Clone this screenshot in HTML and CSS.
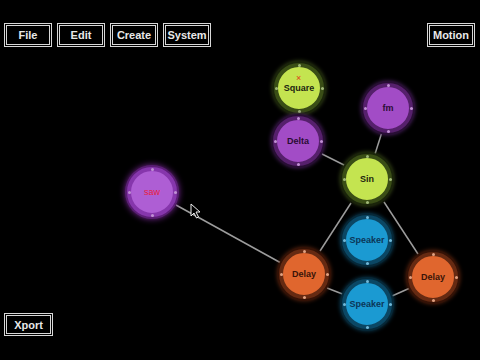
FILE: index.html
```html
<!DOCTYPE html>
<html lang="en">
<head>
    <meta charset="UTF-8">
    <title>Patch Editor</title>
    <link rel="stylesheet" href="styles.css">
</head>
<body>

<!-- Patch canvas: cables + nodes -->
<div class="canvas">
    <svg class="cables" width="480" height="360" viewBox="0 0 480 360">
        <line x1="322" y1="154" x2="346" y2="166"/>
        <line x1="382" y1="132" x2="375" y2="154"/>
        <line x1="351" y1="203" x2="320" y2="251"/>
        <line x1="384" y1="202" x2="418" y2="254"/>
        <line x1="327" y1="288" x2="345" y2="295"/>
        <line x1="392" y1="296" x2="410" y2="288"/>
        <line x1="176" y1="205" x2="281" y2="263"/>
    </svg>

    <div class="node lime" style="left:274px; top:63px;"><span class="del">×</span>Square</div>
    <div class="node purple" style="left:363px; top:83px;">fm</div>
    <div class="node purple" style="left:273px; top:116px;">Delta</div>
    <div class="node lime" style="left:342px; top:154px;">Sin</div>
    <div class="node purple selected" style="left:127px; top:167px;">saw</div>
    <div class="node blue" style="left:342px; top:215px;">Speaker</div>
    <div class="node orange" style="left:279px; top:249px;">Delay</div>
    <div class="node orange" style="left:408px; top:252px;">Delay</div>
    <div class="node blue" style="left:342px; top:279px;">Speaker</div>

    <!-- mouse pointer -->
    <svg class="pointer" width="12" height="16" viewBox="0 0 12 16" style="left:190px; top:203px;">
        <path d="M1 1 L1 13 L4 10 L6.5 15 L8.5 14 L6 9 L10 9 Z" fill="#000" stroke="#eee" stroke-width="1"/>
    </svg>
</div>

<div class="menu-bar">
    <div class="menu-group">
        <button class="menu-button">File</button>
        <button class="menu-button">Edit</button>
        <button class="menu-button">Create</button>
        <button class="menu-button">System</button>
    </div>
    <button class="menu-button">Motion</button>
</div>

<div class="bottom-bar">
    <button class="menu-button">Xport</button>
</div>

</body>
</html>
```

FILE: styles.css
```css
body {
    margin: 0;
    width: 480px;
    height: 360px;
    background-color: #000;
    font-family: "Liberation Sans", Arial, sans-serif;
    display: flex;
    flex-direction: column;
    justify-content: space-between;
    overflow: hidden;
    position: relative;
}
.menu-bar {
    display: flex;
    justify-content: space-between;
    padding: 23px 5px 0 4px;
    position: relative;
}
.menu-group {
    display: flex;
    gap: 5px;
}
.menu-button {
    width: 48px;
    height: 24px;
    background-color: #000;
    color: #e8e8e8;
    border: 3px double #d8d8d8;
    font-family: "Liberation Sans", Arial, sans-serif;
    font-weight: bold;
    font-size: 11px;
    padding: 0;
}
.bottom-bar {
    padding: 0 0 24px 4px;
    position: relative;
}
.bottom-bar .menu-button {
    width: 49px;
    height: 23px;
}
/* Canvas */
.canvas {
    position: absolute;
    left: 0;
    top: 0;
    width: 480px;
    height: 360px;
}
.cables {
    position: absolute;
    left: 0;
    top: 0;
}
.cables line {
    stroke: #9c9c9c;
    stroke-width: 1.5;
}
.pointer {
    position: absolute;
}
.node {
    position: absolute;
    width: 42px;
    height: 42px;
    border-radius: 50%;
    border: 4px solid;
    display: flex;
    align-items: center;
    justify-content: center;
    font-size: 9px;
    font-weight: bold;
}
/* connector dots on the ring */
.node::before,
.node::after {
    content: "";
    position: absolute;
    width: 3px;
    height: 3px;
    border-radius: 50%;
}
.node::before {
    left: 19.5px;
    top: -3.5px;
}
.node::after {
    top: 19.5px;
    left: -3.5px;
}
.lime {
    background-color: #c4e450;
    border-color: #3a4e16;
    color: #1c2410;
    box-shadow: 0 0 0 2px #1a240a, 0 0 4px 2px #3a4a1a;
}
.lime::before { background: #a0b878; box-shadow: 0 46px 0 #a0b878; }
.lime::after { background: #a0b878; box-shadow: 46px 0 0 #a0b878; }
.purple {
    background-color: #a24cc6;
    border-color: #56206c;
    color: #2a0c34;
    box-shadow: 0 0 0 2px #280e34, 0 0 4px 2px #4a2260;
}
.purple::before { background: #c090d4; box-shadow: 0 46px 0 #c090d4; }
.purple::after { background: #c090d4; box-shadow: 46px 0 0 #c090d4; }
.selected {
    background-color: #ae5ed4;
    border-color: #8636ac;
    color: #e8203c;
    font-weight: normal;
    box-shadow: 0 0 0 2px #5a1e74, 0 0 6px 2px #7a2898;
}
.blue {
    background-color: #1b9ad2;
    border-color: #0b4764;
    color: #0b3658;
    box-shadow: 0 0 0 2px #062838, 0 0 4px 2px #0c405a;
}
.blue::before { background: #70b8d8; box-shadow: 0 46px 0 #70b8d8; }
.blue::after { background: #70b8d8; box-shadow: 46px 0 0 #70b8d8; }
.orange {
    background-color: #e0662e;
    border-color: #662a12;
    color: #3a1408;
    box-shadow: 0 0 0 2px #341206, 0 0 4px 2px #5e2610;
}
.orange::before { background: #e0a080; box-shadow: 0 46px 0 #e0a080; }
.orange::after { background: #e0a080; box-shadow: 46px 0 0 #e0a080; }
.del {
    position: absolute;
    top: 7px;
    left: 18px;
    color: #e04018;
    font-size: 9px;
    line-height: 9px;
    font-weight: normal;
}
```
